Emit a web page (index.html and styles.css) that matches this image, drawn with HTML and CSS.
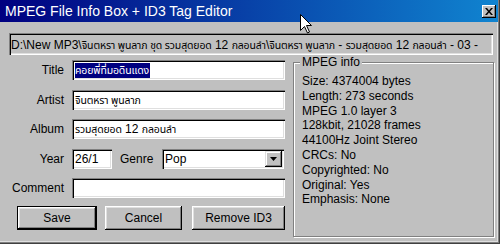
FILE: index.html
```html
<!DOCTYPE html>
<html>
<head>
<meta charset="utf-8">
<link rel="stylesheet" href="styles.css">
</head>
<body>
<div class="window">
  <div class="titlebar">
    <span class="title">MPEG File Info Box + ID3 Tag Editor</span>
    <span class="close"><svg width="8" height="7" viewBox="0 0 8 7"><path d="M0 0h2l2 2.5L6 0h2L5 3.5 8 7H6L4 4.5 2 7H0l3-3.5z" fill="#000"/></svg></span>
  </div>
  <div class="path">D:\New MP3\<span class="th">จินตหรา พูนลาภ ชุด รวมสุดยอด</span> 12 <span class="th">กลอนลำ</span>\<span class="th">จินตหรา พูนลาภ</span> - <span class="th">รวมสุดยอด</span> 12 <span class="th">กลอนลำ</span> - 03 -</div>
  <div class="main">
    <div class="form">
      <label class="lbl">Title</label>
      <div class="field"><span class="sel th">คอยพี่ที่มอดินแดง</span></div>
      <label class="lbl">Artist</label>
      <div class="field"><span class="th">จินตหรา พูนลาภ</span></div>
      <label class="lbl">Album</label>
      <div class="field"><span class="th">รวมสุดยอด</span> 12 <span class="th">กลอนลำ</span></div>
      <label class="lbl">Year</label>
      <div class="yearrow">
        <div class="field year">26/1</div>
        <span class="genre-lbl">Genre</span>
        <div class="field combo"><span class="combo-text">Pop</span><span class="drop"><svg width="7" height="4" viewBox="0 0 7 4"><path d="M0 0h7L3.5 4z" fill="#000"/></svg></span></div>
      </div>
      <label class="lbl">Comment</label>
      <div class="field"></div>
      <div class="buttons">
        <button class="btn default">Save</button>
        <button class="btn cancel">Cancel</button>
        <button class="btn remove">Remove ID3</button>
      </div>
    </div>
    <div class="group">
      <span class="legend">MPEG info</span>
      <div class="line">Size: 4374004 bytes</div>
      <div class="line">Length: 273 seconds</div>
      <div class="line">MPEG 1.0 layer 3</div>
      <div class="line">128kbit, 21028 frames</div>
      <div class="line">44100Hz Joint Stereo</div>
      <div class="line">CRCs: No</div>
      <div class="line">Copyrighted: No</div>
      <div class="line">Original: Yes</div>
      <div class="line">Emphasis: None</div>
    </div>
  </div>
  <svg class="cursor" width="13" height="20" viewBox="0 0 13 20"><path d="M0.5 0.5V16.5L4.5 12.5L7.5 19L9.5 18L6.5 11.5H11.5Z" fill="#fff" stroke="#000" stroke-width="1"/></svg>
</div>
</body>
</html>
```
FILE: styles.css
```css
* { box-sizing: border-box; }
html, body { margin: 0; padding: 0; }
body {
  width: 500px;
  height: 244px;
  overflow: hidden;
  background: #c0c0c0;
  font-family: "Liberation Sans", Arial, "Noto Sans Thai", "Noto Sans", "DejaVu Sans", sans-serif;
  font-size: 12px;
  color: #000;
}
.window {
  position: relative;
  width: 500px;
  height: 244px;
  background: #c0c0c0;
  box-shadow: inset -1px -1px 0 #404040, inset -2px -2px 0 #808080, inset -3px -3px 0 #dfdfdf;
  display: flex;
  flex-direction: column;
}
.titlebar {
  height: 22px;
  margin-right: 2px;
  background: linear-gradient(to right, #000080, #1084d0);
  display: flex;
  align-items: center;
  justify-content: space-between;
  padding: 0 2px 0 5px;
}
.title {
  color: #fff;
  font-size: 14px;
  white-space: nowrap;
}
.close {
  width: 14px;
  height: 13px;
  background: #c0c0c0;
  box-shadow: inset -1px -1px 0 #000, inset 1px 1px 0 #fff, inset -2px -2px 0 #808080;
  display: flex;
  align-items: center;
  justify-content: center;
  padding-right: 1px;
}
.th {
  font-size: 10.5px;
  letter-spacing: -0.15px;
}
.path {
  margin: 11px 7px 0 9px;
  height: 22px;
  line-height: 20px;
  padding: 2px 2px 0 2px;
  white-space: nowrap;
  overflow: hidden;
  box-shadow: inset 1px 1px 0 #808080, inset 2px 2px 0 #000, inset -1px -1px 0 #fff, inset -2px -2px 0 #dfdfdf;
}
.main {
  display: flex;
  align-items: flex-start;
}
.form {
  width: 286px;
  margin-top: 5px;
  display: grid;
  grid-template-columns: 64px 213px;
  column-gap: 8px;
  grid-auto-rows: 20px;
  row-gap: 9.5px;
  align-items: center;
}
.lbl {
  text-align: right;
  white-space: nowrap;
}
.field {
  height: 20px;
  background: #fff;
  padding: 2px 3px;
  line-height: 16px;
  white-space: nowrap;
  overflow: hidden;
  box-shadow: inset 1px 1px 0 #808080, inset 2px 2px 0 #000, inset -1px -1px 0 #fff, inset -2px -2px 0 #dfdfdf;
}
.sel {
  background: #000080;
  color: #fff;
  display: inline-block;
  line-height: 15px;
  padding-right: 1px;
}
.yearrow {
  display: flex;
  align-items: center;
}
.year {
  width: 40px;
  flex: none;
}
.genre-lbl {
  margin-left: 8px;
  width: 42px;
  flex: none;
}
.combo {
  flex: 1;
  margin-right: 1px;
  display: flex;
  align-items: center;
  justify-content: space-between;
  padding: 2px 2px 2px 3px;
}
.drop {
  width: 17px;
  height: 16px;
  background: #c0c0c0;
  box-shadow: inset -1px -1px 0 #000, inset 1px 1px 0 #dfdfdf, inset -2px -2px 0 #808080, inset 2px 2px 0 #fff;
  display: flex;
  align-items: center;
  justify-content: center;
}
.buttons {
  grid-column: 1 / span 2;
  height: 24px;
  display: flex;
  margin-left: 17px;
}
.btn {
  font-family: inherit;
  font-size: 12px;
  color: #000;
  background: #c0c0c0;
  border: none;
  height: 24px;
  padding: 0;
  box-shadow: inset -1px -1px 0 #000, inset 1px 1px 0 #fff, inset -2px -2px 0 #808080, inset 2px 2px 0 #dfdfdf;
}
.btn.default {
  width: 80px;
  border: 1px solid #000;
}
.btn.cancel {
  width: 77px;
  margin-left: 8px;
}
.btn.remove {
  width: 93px;
  margin-left: 10px;
}
.group {
  position: relative;
  margin-top: 7px;
  margin-left: 7px;
  width: 201px;
  height: 175px;
  border: 1px solid #808080;
  box-shadow: inset 1px 1px 0 #fff, 1px 1px 0 #fff;
  padding: 11px 0 0 8px;
}
.legend {
  position: absolute;
  top: -8px;
  left: 6px;
  padding: 0 2px;
  background: #c0c0c0;
  line-height: 14px;
}
.line {
  line-height: 14.8px;
  white-space: nowrap;
}
.cursor {
  position: absolute;
  left: 300px;
  top: 14px;
}
```
